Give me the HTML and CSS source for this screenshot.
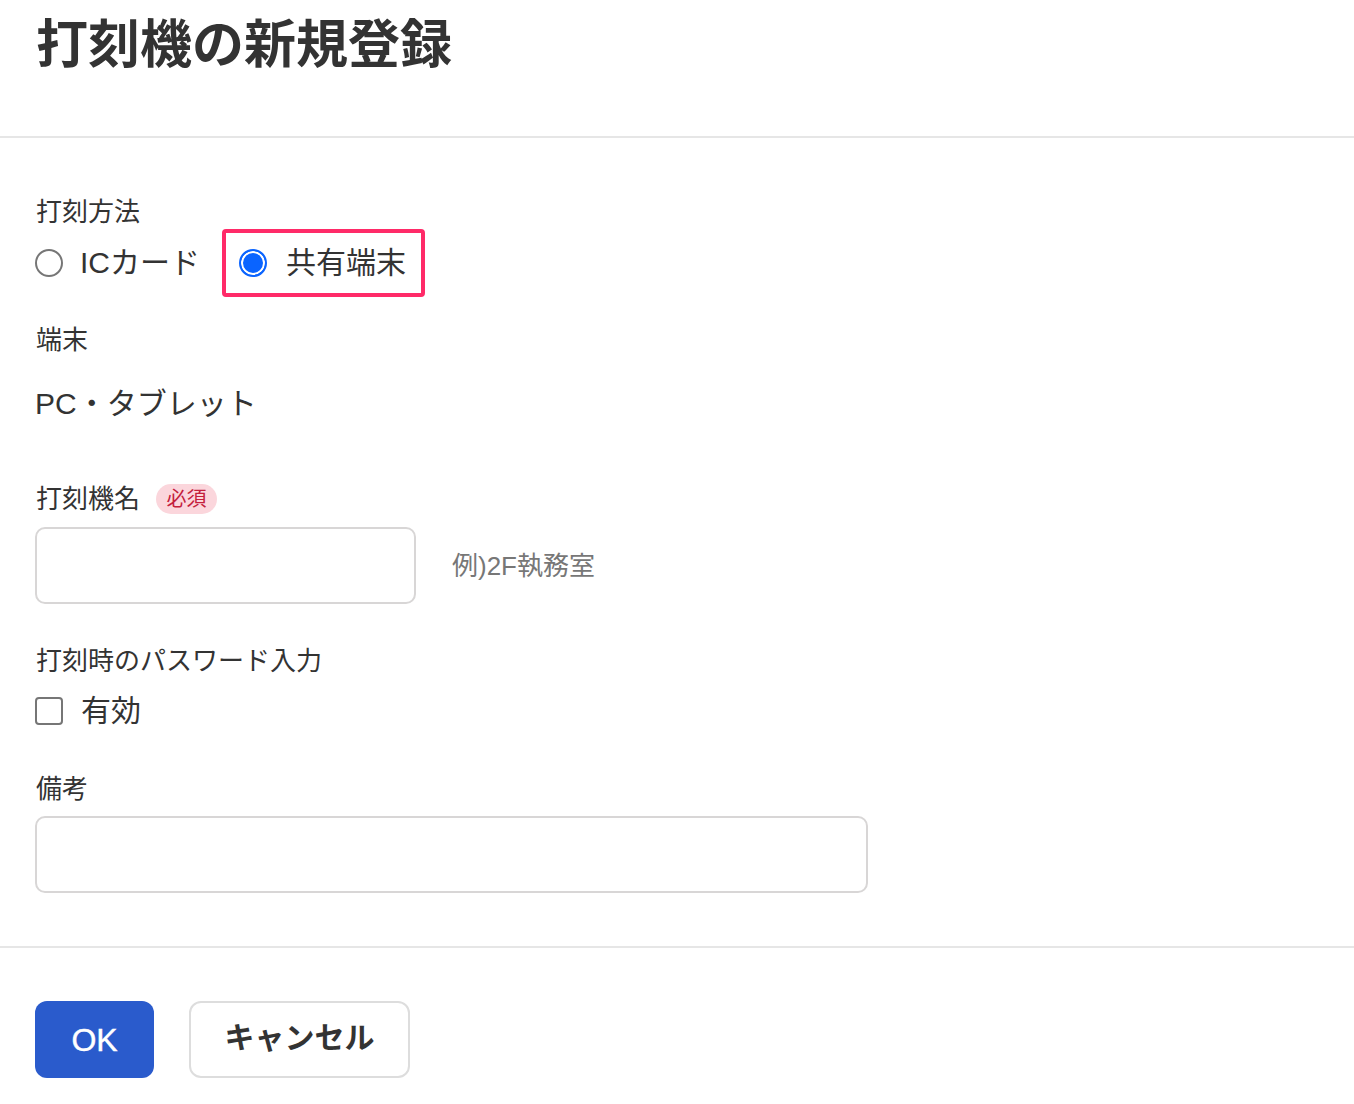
FILE: index.html
```html
<!DOCTYPE html>
<html lang="ja">
<head>
<meta charset="utf-8">
<title>打刻機の新規登録</title>
<link rel="stylesheet" href="styles.css">
</head>
<body>
<header class="header">
  <h1 class="title">打刻機の新規登録</h1>
</header>
<main class="content">
  <div class="label label-first">打刻方法</div>
  <div class="radio-row">
    <label class="option">
      <span class="radio"></span>
      <span class="option-text">ICカード</span>
    </label>
    <label class="option option-highlight">
      <span class="radio radio-checked"></span>
      <span class="option-text">共有端末</span>
    </label>
  </div>

  <div class="label label-device">端末</div>
  <div class="value">PC・タブレット</div>

  <div class="label-row">
    <span class="label-inline">打刻機名</span>
    <span class="badge">必須</span>
  </div>
  <div class="input-row">
    <div class="input input-name"></div>
    <span class="hint">例)2F執務室</span>
  </div>

  <div class="label label-password">打刻時のパスワード入力</div>
  <label class="option check-row">
    <span class="checkbox"></span>
    <span class="option-text">有効</span>
  </label>

  <div class="label label-note">備考</div>
  <div class="input input-note"></div>
</main>
<footer class="footer">
  <button class="btn btn-primary">OK</button>
  <button class="btn btn-secondary">キャンセル</button>
</footer>
</body>
</html>
```

FILE: styles.css
```css
* { box-sizing: border-box; }

body {
  margin: 0;
  background: #fff;
  color: #333;
  font-family: "Liberation Sans", "Noto Sans CJK JP", sans-serif;
}

.header {
  height: 138px;
  border-bottom: 2px solid #e6e6e6;
  padding: 19px 0 0 36px;
}

.title {
  margin: 0;
  font-size: 52px;
  line-height: 52px;
  font-weight: 700;
  color: #333;
}

.content {
  padding: 0 35px 0 35px;
  display: flex;
  flex-direction: column;
  align-items: flex-start;
}

.label {
  font-size: 26px;
  line-height: 26px;
  padding-left: 1px;
}

.label-first { margin-top: 61px; }
.label-device { margin-top: 30px; }
.label-password { margin-top: 44px; }
.label-note { margin-top: 50px; }

.radio-row {
  display: flex;
  align-items: center;
  margin-top: 4px;
  gap: 22px;
}

.option {
  display: flex;
  align-items: center;
  gap: 17px;
  font-size: 30px;
  line-height: 30px;
}

.option-highlight {
  height: 68px;
  border: 4px solid #ff2a68;
  border-radius: 4px;
  padding: 0 15px 0 13px;
  gap: 19px;
}

.radio {
  width: 28px;
  height: 28px;
  border-radius: 50%;
  border: 2px solid #767676;
  background: #fff;
  flex: none;
}

.radio-checked {
  border-color: #0a64ff;
  background: #0a64ff;
  box-shadow: inset 0 0 0 2px #fff;
}

.value {
  margin-top: 36px;
  font-size: 30px;
  line-height: 30px;
}

.label-row {
  margin-top: 65px;
  display: flex;
  align-items: center;
  height: 30px;
  gap: 16px;
  padding-left: 1px;
}

.label-inline {
  font-size: 26px;
  line-height: 26px;
}

.badge {
  height: 30px;
  width: 61px;
  border-radius: 15px;
  background: #fbd6dc;
  color: #c4203c;
  font-size: 20px;
  line-height: 30px;
  text-align: center;
}

.input-row {
  margin-top: 13px;
  display: flex;
  align-items: center;
  gap: 36px;
}

.input {
  height: 77px;
  border: 2px solid #d8d6d6;
  border-radius: 10px;
  background: #fff;
}

.input-name { width: 381px; }
.input-note { width: 833px; margin-top: 14px; }

.hint {
  font-size: 26px;
  line-height: 26px;
  color: #777;
}

.check-row {
  margin-top: 22px;
  height: 30px;
  gap: 18px;
}

.checkbox {
  width: 28px;
  height: 28px;
  border: 2px solid #767676;
  border-radius: 4px;
  background: #fff;
  flex: none;
}

.footer {
  margin-top: 53px;
  border-top: 2px solid #e6e6e6;
  padding: 53px 0 0 35px;
  display: flex;
  gap: 35px;
}

.btn {
  height: 77px;
  border-radius: 12px;
  font-family: "Liberation Sans", "Noto Sans CJK JP", sans-serif;
  font-size: 32px;
  line-height: 32px;
  padding: 0;
  cursor: pointer;
}

.btn-primary {
  width: 119px;
  background: #2a5bcc;
  border: none;
  color: #fff;
  font-weight: 400;
  -webkit-text-stroke: 0.4px #fff;
}

.btn-secondary {
  width: 221px;
  background: #fff;
  border: 2px solid #dddddd;
  color: #333;
  font-weight: 700;
  font-size: 30px;
  padding-bottom: 3px;
}
```
